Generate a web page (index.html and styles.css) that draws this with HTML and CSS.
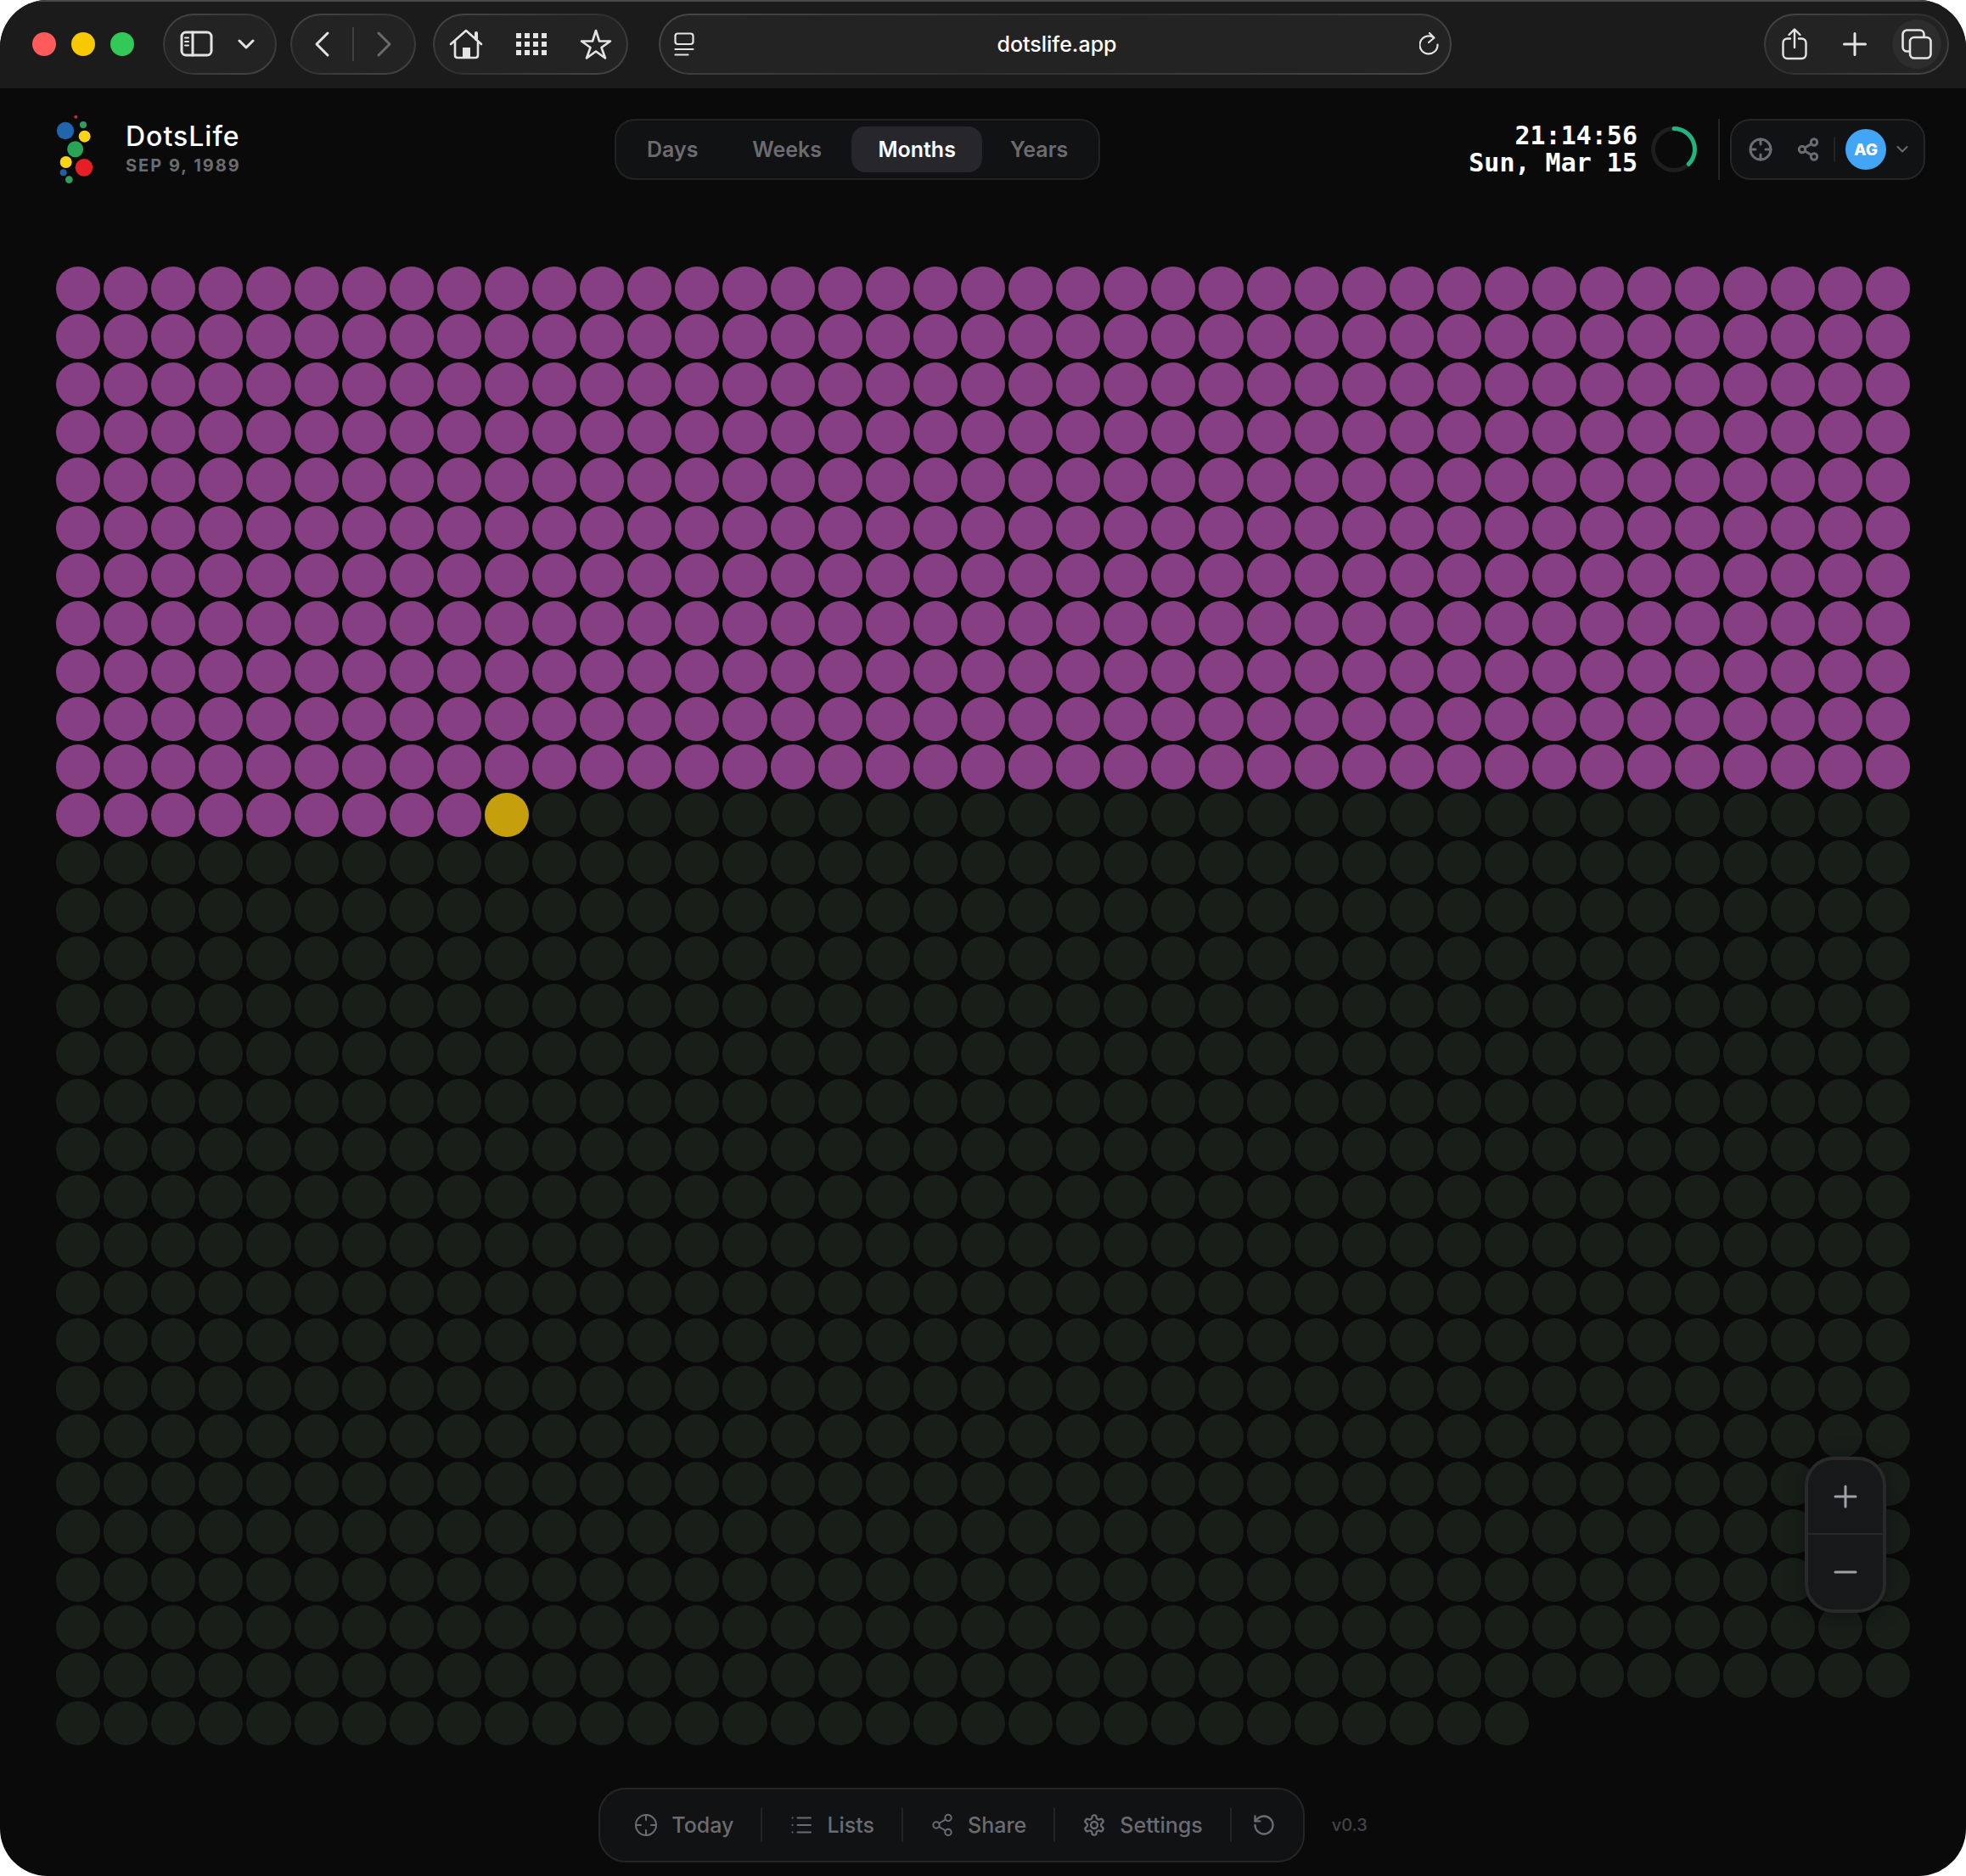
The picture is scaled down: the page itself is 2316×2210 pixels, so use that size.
FILE: index.html
```html
<!DOCTYPE html>
<html lang="en">
<head>
<meta charset="utf-8">
<title>DotsLife</title>
<link rel="stylesheet" href="styles.css">
</head>
<body>
<div class="window">
  <header class="toolbar">
    <div class="lights"><span class="light light-red"></span><span class="light light-yellow"></span><span class="light light-green"></span></div>
    <div class="group group-sidebar">
      <button class="icon-btn" aria-label="Sidebar"><svg width="40" height="32" viewBox="0 0 40 32"><rect x="2" y="2" width="35" height="27" rx="5" stroke-width="3"/><path d="M15 2v27" stroke-width="3"/><path d="M6 8.500h4M6 13h4M6 17.500h4" stroke-width="2"/></svg></button>
      <button class="icon-btn" aria-label="Tab groups"><svg width="20" height="14" viewBox="0 0 20 14"><path d="M2 3l8 8 8-8" stroke-width="3"/></svg></button>
    </div>
    <div class="group group-history">
      <button class="icon-btn" aria-label="Back"><svg width="20" height="32" viewBox="0 0 20 32"><path d="M17 3L4 16l13 13" stroke-width="3"/></svg></button>
      <span class="history-line"></span>
      <button class="icon-btn icon-dim" aria-label="Forward"><svg width="20" height="32" viewBox="0 0 20 32"><path d="M3 3l13 13L3 29" stroke-width="3"/></svg></button>
    </div>
    <div class="group group-places">
      <button class="icon-btn" aria-label="Home"><svg width="40" height="38" viewBox="0 0 40 38"><path d="M2 19L20 3l18 16M7 15v17q0 3 3 3h21q3 0 3-3V15" stroke-width="2.600"/><path d="M32 13V6" stroke-width="4"/><path class="solid" d="M16 23h9v12h-9z"/></svg></button>
      <button class="icon-btn" aria-label="Top sites"><svg width="36" height="26" viewBox="0 0 36 26"><path class="solid" d="M0 0h6v6H0zM10 0h6v6h-6zM20 0h6v6h-6zM30 0h6v6h-6zM0 10h6v6H0zM10 10h6v6h-6zM20 10h6v6h-6zM30 10h6v6h-6zM0 20h6v6H0zM10 20h6v6h-6zM20 20h6v6h-6zM30 20h6v6h-6z"/></svg></button>
      <button class="icon-btn" aria-label="Bookmarks"><svg width="38" height="38" viewBox="0 0 38 38"><path d="M19 3l4 12.500h13L25.500 23l4.500 12.500-11-8-11 8L12.500 23 2 15.500h13z" stroke-width="2.600"/></svg></button>
    </div>
    <div class="group group-address">
      <button class="icon-btn" aria-label="Page menu"><svg width="24" height="28" viewBox="0 0 24 28"><rect x="1.500" y="1.500" width="21" height="12.500" rx="3" stroke-width="2.200"/><path d="M1.500 20h21M1.500 26.500h15" stroke-width="2.200"/></svg></button>
      <input class="address" type="text" value="dotslife.app" aria-label="Address">
      <button class="icon-btn" aria-label="Reload"><svg width="24" height="30" viewBox="0 0 24 30"><path d="M21.500 15.500A10.500 10.500 0 1 1 16.500 7M12 2l5.500 5.500L11 13" stroke-width="2.200"/></svg></button>
    </div>
    <div class="group group-actions">
      <button class="icon-btn" aria-label="Share page"><svg width="30" height="38" viewBox="0 0 30 38"><path d="M10 12.500H6.500a5 5 0 0 0-5 5V31a5 5 0 0 0 5 5h17a5 5 0 0 0 5-5V17.500a5 5 0 0 0-5-5H20M15 23V2M8.500 8L15 1.500 21.500 8" stroke-width="2.400"/></svg></button>
      <button class="icon-btn" aria-label="New tab"><svg width="28" height="28" viewBox="0 0 28 28"><path d="M14 1.500v25M1.500 14h25" stroke-width="3"/></svg></button>
      <button class="icon-btn icon-round" aria-label="All tabs"><svg width="36" height="36" viewBox="0 0 36 36"><rect x="10" y="10" width="24.500" height="24.500" rx="5" stroke-width="2.600"/><path d="M9 26.500H6.500a5 5 0 0 1-5-5v-15a5 5 0 0 1 5-5h15a5 5 0 0 1 5 5V9" stroke-width="2.600"/></svg></button>
    </div>
  </header>

  <main class="app">
    <div class="app-header">
      <div class="brand">
        <svg class="logo" viewBox="198 399 132 258" aria-hidden="true">
          <circle cx="268" cy="413" r="6" fill="#b8323a"/><circle cx="231" cy="462" r="30.500" fill="#1f66ad"/>
          <circle cx="294" cy="441" r="12" fill="#2f9e5e"/><circle cx="299" cy="482" r="21" fill="#fbd514"/>
          <circle cx="266" cy="527" r="28.500" fill="#27a455"/><circle cx="233" cy="573" r="21" fill="#fbd514"/>
          <circle cx="297" cy="592" r="31" fill="#e61f26"/><circle cx="224" cy="610" r="12" fill="#225f9f"/>
          <circle cx="244" cy="635" r="13" fill="#2f9e5e"/>
        </svg>
        <div class="brand-text"><h1 class="brand-name">DotsLife</h1><div class="brand-date">SEP 9, 1989</div></div>
      </div>
      <nav class="tabs">
        <button class="tab">Days</button><button class="tab">Weeks</button><button class="tab tab-active">Months</button><button class="tab">Years</button>
      </nav>
      <div class="status">
        <div class="clock"><div>21:14:56</div><div>Sun, Mar 15</div></div>
        <svg class="ring" viewBox="0 0 54 54" aria-hidden="true"><circle cx="27" cy="27" r="24.500" stroke="#1e1e1e" stroke-width="5"/><path d="M27 2.500A24.500 24.500 0 0 1 44.300 44.300" stroke="#22b47f" stroke-width="5"/></svg>
        <span class="status-line"></span>
        <div class="account">
          <button class="tool-btn" aria-label="Today"><svg width="28" height="28" viewBox="0 0 28 28"><circle cx="14" cy="14" r="12"/><path d="M14 2v6M14 20v6M2 14h6M20 14h6"/></svg></button>
          <button class="tool-btn tool-share" aria-label="Share"><svg width="28" height="28" viewBox="0 0 28 28"><circle cx="21" cy="5.500" r="3.700"/><circle cx="7" cy="14" r="3.700"/><circle cx="21" cy="22.500" r="3.700"/><path d="M10.200 12l7.600-4.500M10.200 16l7.600 4.500"/></svg></button>
          <span class="account-line"></span>
          <button class="profile" aria-label="Account AG"><span class="avatar">AG</span><svg width="14" height="10" viewBox="0 0 14 10"><path d="M1.500 2L7 7.500 12.500 2"/></svg></button>
        </div>
      </div>
    </div>

    <div class="dots" id="dots"></div>

    <footer class="footer">
      <div class="dock">
        <button class="dock-btn"><svg width="28" height="28" viewBox="0 0 28 28"><circle cx="14" cy="14" r="12"/><path d="M14 2v6M14 20v6M2 14h6M20 14h6"/></svg><span>Today</span></button>
        <span class="dock-line"></span>
        <button class="dock-btn"><svg width="28" height="28" viewBox="0 0 28 28"><path d="M9.500 5.500H25M9.500 14H25M9.500 22.500H25M3.500 5.500h.1M3.500 14h.1M3.500 22.500h.1"/></svg><span>Lists</span></button>
        <span class="dock-line"></span>
        <button class="dock-btn"><svg width="28" height="28" viewBox="0 0 28 28"><circle cx="21" cy="5.500" r="3.700"/><circle cx="7" cy="14" r="3.700"/><circle cx="21" cy="22.500" r="3.700"/><path d="M10.200 12l7.600-4.500M10.200 16l7.600 4.500"/></svg><span>Share</span></button>
        <span class="dock-line"></span>
        <button class="dock-btn"><svg width="28" height="28" viewBox="0 0 24 24"><path d="M12.220 2h-.44a2 2 0 0 0-2 2v.18a2 2 0 0 1-1 1.730l-.43.25a2 2 0 0 1-2 0l-.15-.08a2 2 0 0 0-2.730.73l-.22.38a2 2 0 0 0 .73 2.730l.15.1a2 2 0 0 1 1 1.720v.51a2 2 0 0 1-1 1.740l-.15.09a2 2 0 0 0-.73 2.730l.22.38a2 2 0 0 0 2.730.73l.15-.08a2 2 0 0 1 2 0l.43.25a2 2 0 0 1 1 1.730V20a2 2 0 0 0 2 2h.44a2 2 0 0 0 2-2v-.18a2 2 0 0 1 1-1.730l.43-.25a2 2 0 0 1 2 0l.15.08a2 2 0 0 0 2.730-.73l.22-.39a2 2 0 0 0-.73-2.730l-.15-.08a2 2 0 0 1-1-1.740v-.5a2 2 0 0 1 1-1.740l.15-.09a2 2 0 0 0 .73-2.730l-.22-.38a2 2 0 0 0-2.730-.73l-.15.08a2 2 0 0 1-2 0l-.43-.25a2 2 0 0 1-1-1.730V4a2 2 0 0 0-2-2z"/><circle cx="12" cy="12" r="3.400"/></svg><span>Settings</span></button>
        <span class="dock-line"></span>
        <button class="dock-btn dock-reset" aria-label="Reset"><svg width="28" height="28" viewBox="0 0 24 24"><path d="M3 12a9 9 0 1 0 9-9 9.750 9.750 0 0 0-6.740 2.740L3 8"/><path d="M3 3v5h5"/></svg></button>
      </div>
      <span class="version">v0.3</span>
    </footer>
  </main>

  <div class="zoom">
    <button class="zoom-btn" aria-label="Zoom in"><svg width="28" height="28" viewBox="0 0 28 28"><path d="M14 2v24M2 14h24"/></svg></button>
    <button class="zoom-btn" aria-label="Zoom out"><svg width="28" height="28" viewBox="0 0 28 28"><path d="M2 14h24"/></svg></button>
  </div>
</div>
<script src="dots.js"></script>
</body>
</html>
```
FILE: styles.css
```css
* { box-sizing: border-box; }
html { background: #fff; }
body { margin: 0; font-family: Inter, "Liberation Sans", sans-serif; color: #fff; }
button { margin: 0; padding: 0; border: 0; background: none; color: inherit; font: inherit; }
svg { display: block; flex: none; fill: none; stroke: currentColor; stroke-linecap: round; stroke-linejoin: round; }

.window { position: relative; display: flex; flex-direction: column; min-height: 100vh; overflow: hidden; border-radius: 56px; background: #0a0a0a; }

/* Browser toolbar */
.toolbar { display: flex; align-items: center; height: 104px; padding: 0 20px 2px 38px; border-top: 2px solid #4a4a4a; background: #1b1b1b; }
.lights { display: flex; gap: 18px; margin-right: 34px; }
.light { width: 28px; height: 28px; border-radius: 50%; }
.light-red { background: #ff5b5b; }
.light-yellow { background: #f9c900; }
.light-green { background: #32c957; }
.group { display: flex; align-items: center; height: 72px; border: 2px solid transparent; border-radius: 36px; background: linear-gradient(#232323, #232323) padding-box, linear-gradient(160deg, #474747, #303030 50%, #474747) border-box; }
.icon-btn { color: #e4e4e4; }
.icon-dim { color: #6a6a6a; }
.solid { fill: currentColor; stroke: none; }
.group-sidebar { gap: 28px; margin-right: 16px; padding: 0 24px 0 18px; }
.group-history { gap: 26px; margin-right: 20px; padding: 0 25px; }
.history-line { width: 2px; height: 40px; background: #414141; }
.group-places { justify-content: space-between; width: 230px; margin-right: 36px; padding: 0 17px; }
.group-address { flex: 0 1 934px; padding: 0 12px 0 16px; }
.address { flex: 1; min-width: 0; border: 0; outline: 0; background: none; color: #fff; font: 500 25px/32px Inter, sans-serif; text-align: center; }
.group-actions { gap: 42px; margin-left: auto; padding: 0 7px 0 19px; }
.icon-round { display: flex; align-items: center; justify-content: center; width: 58px; height: 58px; margin-left: -12px; border-radius: 50%; background: #2d2d2d; }

/* App header */
.app { display: flex; flex: 1; flex-direction: column; }
.app-header { display: flex; align-items: center; justify-content: space-between; height: 144px; padding: 0 48px 0 66px; }
.brand { display: flex; align-items: center; gap: 38px; min-width: 224px; }
.logo { width: 44px; height: 86px; stroke: none; }
.brand-name { margin: 0; font-size: 32px; font-weight: 500; line-height: 38px; letter-spacing: 1px; }
.brand-date { color: #6b6b70; font-size: 20px; font-weight: 700; line-height: 30px; letter-spacing: 2px; }
.tabs { display: grid; grid-template-columns: 118px 144px 154px 126px; gap: 4px; padding: 7px; border: 2px solid #202224; border-radius: 24px; background: #111214; }
.tab { height: 54px; border-radius: 16px; color: #6b6b70; font-size: 25px; font-weight: 600; }
.tab-active { background: #27262a; color: #fff; }
.status { display: flex; align-items: center; }
.clock { font: 700 30px/32px "DejaVu Sans Mono", monospace; text-align: right; }
.ring { width: 54px; height: 54px; margin: 0 25px 0 16px; }
.status-line { width: 2px; height: 72px; margin-right: 12px; background: #242426; }
.account { display: flex; align-items: center; width: 230px; height: 72px; padding-left: 20px; border: 2px solid #242628; border-radius: 24px; background: #111214; }
.tool-btn { color: #6b6b70; stroke-width: 2; }
.tool-btn svg { stroke-width: 3; }
.tool-share { margin: 0 16px 0 28px; }
.account-line { width: 2px; height: 28px; margin-right: 12px; background: #242426; }
.profile { display: flex; align-items: center; gap: 12px; color: #6b6b70; stroke-width: 2; }
.avatar { display: grid; place-items: center; width: 48px; height: 48px; border-radius: 50%; background: #42a5f5; color: #fff; font-size: 19px; font-weight: 800; }

/* One dot per month */
.dots { display: grid; flex: 1; grid-template-columns: repeat(39, 1fr); grid-auto-rows: 1fr; gap: 4px; margin: 66px 66px 50px; }
.dot { border-radius: 50%; background: #181f19; }
.dot-past { background: #853f82; }
.dot-now { background: #c6a00c; }

/* Footer dock */
.footer { display: flex; align-items: center; justify-content: center; gap: 32px; padding-bottom: 16px; }
.dock { display: flex; align-items: center; height: 88px; padding: 0 8px; border: 2px solid #232527; border-radius: 32px; background: #111214; }
.dock-btn { display: flex; align-items: center; gap: 16px; height: 64px; padding: 0 32px; color: #6b6b70; font-size: 25px; font-weight: 500; }
.dock-btn svg { stroke-width: 2; }
.dock-reset { padding: 0 24px; }
.dock-line { width: 2px; height: 40px; background: #242426; }
.version { color: #434347; font-size: 20px; font-weight: 500; }

/* Zoom control over the grid */
.zoom { position: absolute; right: 94px; bottom: 310px; width: 96px; overflow: hidden; border: 4px solid #29292b; border-radius: 34px; background: #17181a; box-shadow: 0 4px 24px rgba(0, 0, 0, .4); }
.zoom-btn { display: flex; align-items: center; justify-content: center; width: 100%; height: 88px; color: #a0a0a5; stroke-width: 3; }
.zoom-btn:first-child { border-bottom: 2px solid #262729; }
```
FILE: dots.js
```js
// September 1989 up to the current month, out of a hundred years.
const lived = 438;
const total = 1201;
const grid = document.getElementById("dots");
for (let i = 0; i < total; i++) {
  const dot = document.createElement("span");
  dot.className = "dot" + (i < lived ? " dot-past" : i === lived ? " dot-now" : "");
  grid.append(dot);
}
```
